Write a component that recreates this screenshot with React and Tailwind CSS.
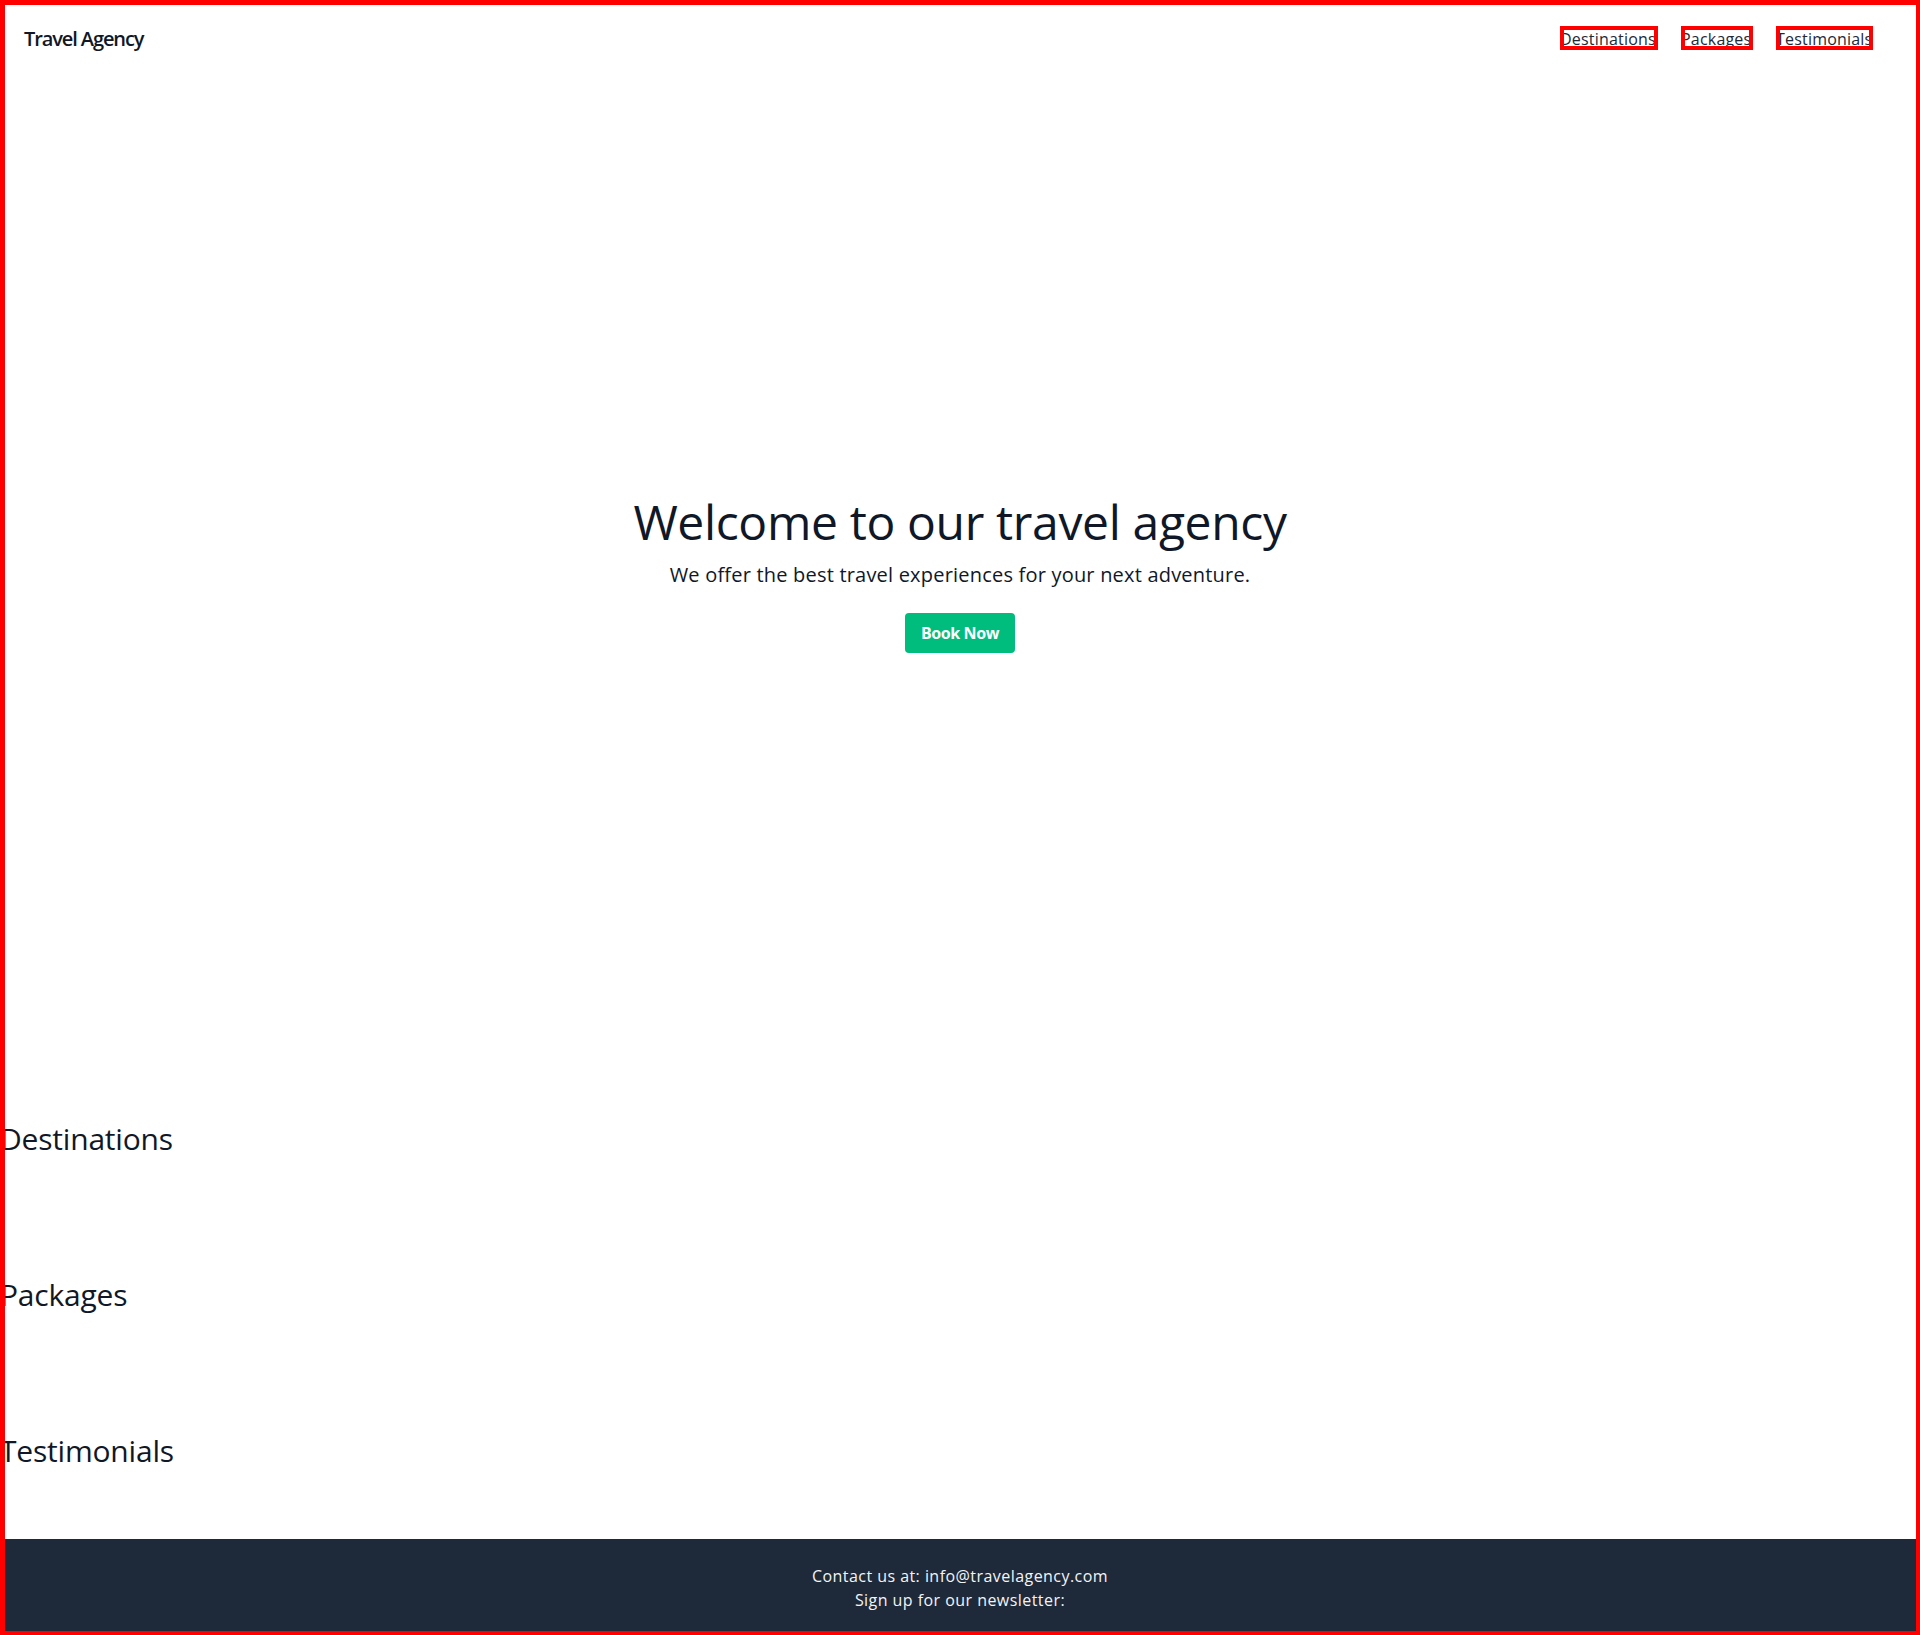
import React from 'react';

const font = { fontFamily: '"Open Sans", "Noto Sans", sans-serif' };

// outlined nav links: the red box is drawn on top of the label
const NavLink = ({ label, width }) => (
    <li className={`relative h-6 ${width}`}>
        <a href={`#${label.toLowerCase()}`} className="block h-6 overflow-hidden whitespace-nowrap pt-px text-base leading-6 text-gray-800 tracking-[0.2px]">
            {label}
        </a>
        <span className="pointer-events-none absolute inset-0 border-4 border-[#ff0000]" />
    </li>
);

const Section = ({ id, title }) => (
    <section id={id} className="pt-[50px] pb-[46px]">
        <h2 className="mb-6 h-9 text-3xl leading-9 text-gray-900 tracking-[-0.2px]">{title}</h2>
    </section>
);

const App = () => {
    return (
        <div className="relative min-h-screen bg-white" style={font}>
            <header className="flex h-[76px] items-center justify-between pl-6 pr-[47px]">
                <div className="pt-0.5 text-xl font-semibold leading-7 text-gray-900 tracking-[-1.1px]">Travel Agency</div>
                <nav>
                    <ul className="flex gap-[23px]">
                        <NavLink label="Destinations" width="w-[98px]" />
                        <NavLink label="Packages" width="w-[72px]" />
                        <NavLink label="Testimonials" width="w-[97px]" />
                    </ul>
                </nav>
            </header>

            <main>
                <section className="flex h-[995px] flex-col items-center justify-center pt-[3px] text-center">
                    <h1 className="mb-[15px] text-5xl leading-none text-gray-900 tracking-[-0.35px]">Welcome to our travel agency</h1>
                    <p className="mb-6 text-xl leading-7 text-gray-900 tracking-[0.2px]">We offer the best travel experiences for your next adventure.</p>
                    <button className="rounded bg-emerald-500 px-4 py-2 text-base font-bold leading-6 text-white tracking-[-0.4px]">Book Now</button>
                </section>

                <Section id="destinations" title="Destinations" />
                <Section id="packages" title="Packages" />
                <Section id="testimonials" title="Testimonials" />
            </main>

            <footer className="bg-gray-800 pt-[25px] pb-[23px] text-center text-base leading-6 text-gray-100 tracking-[0.45px]">
                <p>Contact us at: info@travelagency.com</p>
                <p>Sign up for our newsletter:</p>
            </footer>

            {/* page outline drawn over everything */}
            <div className="pointer-events-none absolute inset-0 border-t-[5px] border-l-[5px] border-r-4 border-b-4 border-[#ff0000]" />
        </div>
    );
};

export default App;
